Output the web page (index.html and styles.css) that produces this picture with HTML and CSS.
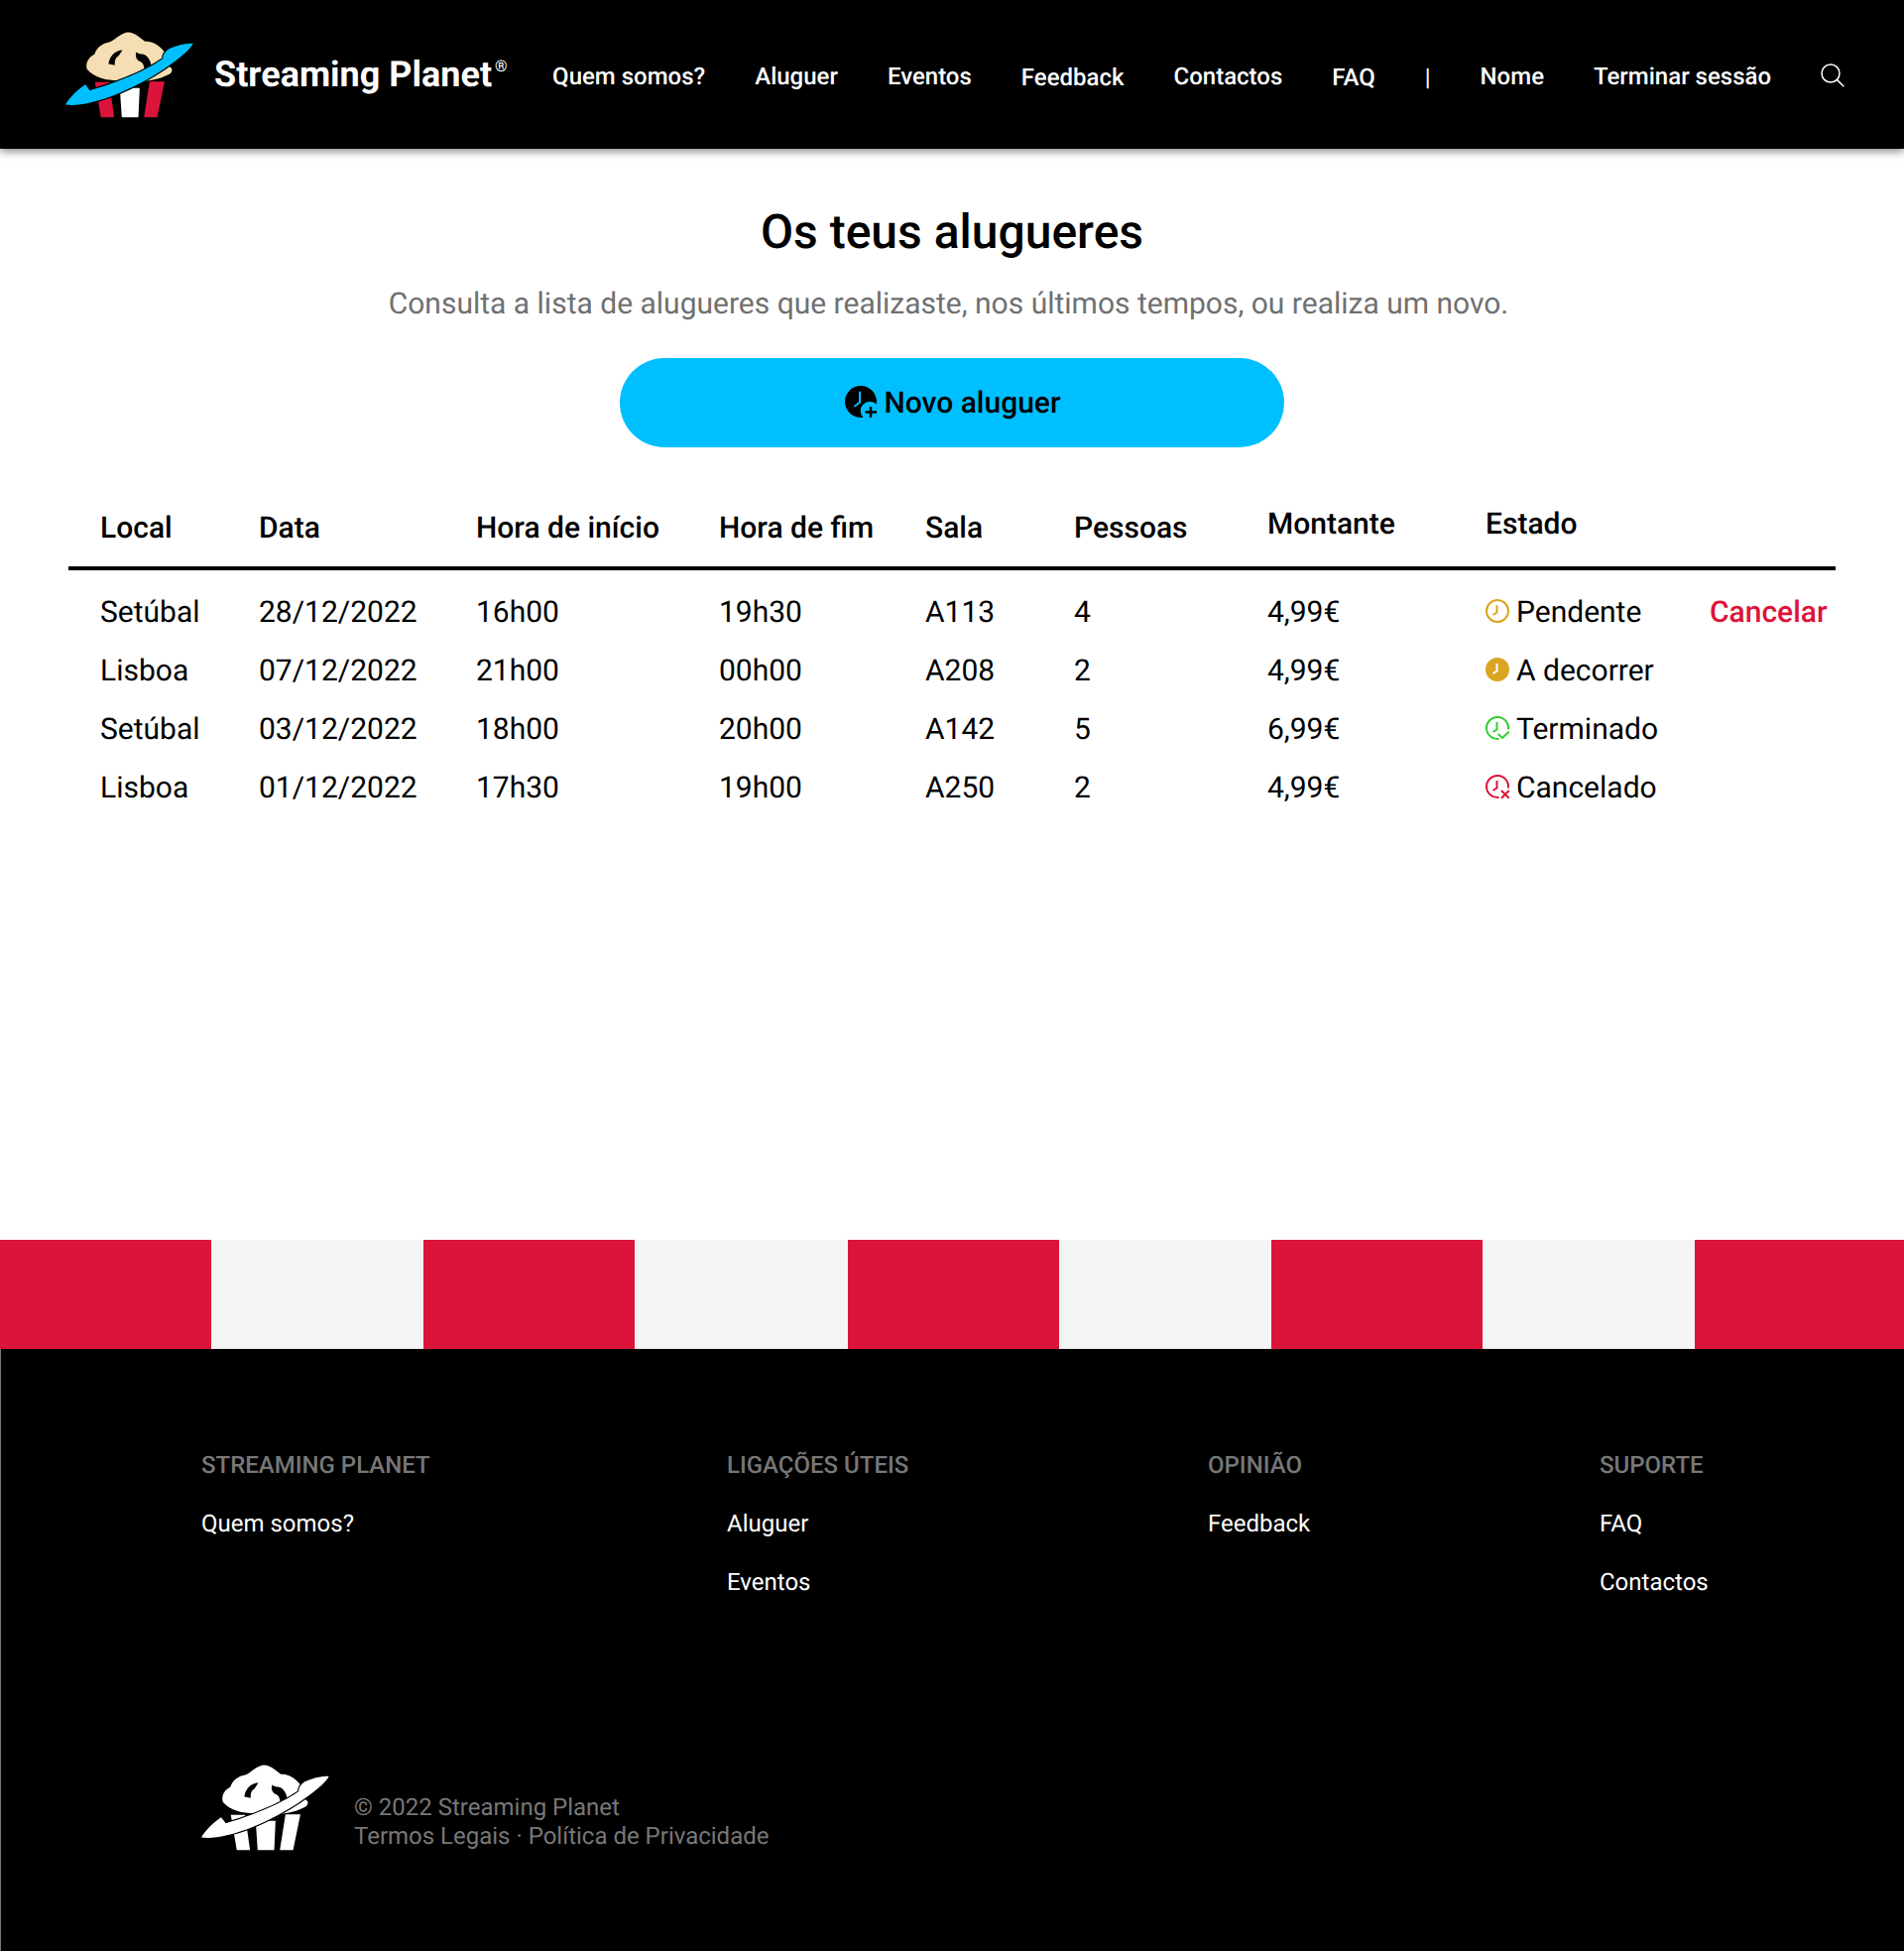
FILE: index.html
```html
<!DOCTYPE html>
<html lang="pt">
<head>
<meta charset="utf-8">
<title>Streaming Planet</title>
<link rel="stylesheet" href="styles.css">
</head>
<body>
<header class="topbar">
  <a class="brand" href="#">
    <svg class="logo" viewBox="48 65 386 260" aria-hidden="true">
      <path class="logo-stripe" d="M137 217H180L195 323H155Z"/>
      <path class="logo-center" d="M212 235H272L268 323H218Z"/>
      <path class="logo-stripe" d="M302 215H347L325 323H285Z"/>
      <path class="logo-corn" d="M113 178C108 160 116 143 136 132C142 112 160 100 178 97C195 92 212 70 235 66C258 66 272 82 288 94C312 92 335 108 350 130C356 150 350 160 362 170C374 176 372 190 355 196C320 215 250 222 205 212C175 212 135 205 113 178Z"/>
      <path class="logo-hole" d="M178 162C180 140 198 120 220 120L208 138C200 142 196 150 197 166Z"/>
      <path class="logo-hole" d="M262 126C272 136 286 128 294 140C304 150 308 165 306 172L286 182C286 165 280 155 268 152C260 145 258 135 262 126Z"/>
      <path class="logo-ring" d="M48 285C62 260 85 240 108 224L122 242C180 226 280 190 342 146C342 132 352 122 362 116C385 106 412 98 433 100C425 120 385 150 345 178C290 215 200 262 125 278C95 286 68 288 48 285Z"/>
    </svg>
    <span class="brand-name">Streaming Planet<sup class="brand-mark">®</sup></span>
  </a>
  <nav class="mainnav">
    <a href="#">Quem somos?</a>
    <a href="#">Aluguer</a>
    <a href="#">Eventos</a>
    <a class="nudge" href="#">Feedback</a>
    <a href="#">Contactos</a>
    <a class="nudge" href="#">FAQ</a>
    <span class="nudge sep">|</span>
    <a href="#">Nome</a>
    <a href="#">Terminar sessão</a>
    <a class="search" href="#" aria-label="Pesquisar">
      <svg viewBox="0 0 24 24"><circle cx="10" cy="10" r="9"/><path d="M16.6 16.6L23.3 23.3"/></svg>
    </a>
  </nav>
</header>

<main class="content">
  <h1 class="title">Os teus alugueres</h1>
  <p class="lead">Consulta a lista de alugueres que realizaste, nos últimos tempos, ou realiza um novo.</p>
  <a class="cta" href="#">
    <svg class="cta-icon" viewBox="0 0 32 32" aria-hidden="true">
      <path class="cta-disc" d="M16 0A16 16 0 0 1 31.800 18.500A9 9 0 0 0 18.500 31.800A16 16 0 1 1 16 0Z"/>
      <path class="cta-hand" d="M15 6.500V16.500L10 20.500"/>
      <path class="cta-plus" d="M26 21V32M20.500 26.500H32"/>
    </svg>
    <span>Novo aluguer</span>
  </a>
  <table class="rentals">
    <colgroup>
      <col class="c-local"><col class="c-date"><col class="c-start"><col class="c-end"><col class="c-room"><col class="c-people"><col class="c-amount"><col class="c-state"><col class="c-action">
    </colgroup>
    <thead>
      <tr>
        <th>Local</th><th>Data</th><th>Hora de início</th><th>Hora de fim</th><th>Sala</th><th>Pessoas</th><th class="raised">Montante</th><th class="raised">Estado</th><th></th>
      </tr>
    </thead>
    <tbody>
      <tr>
        <td>Setúbal</td><td>28/12/2022</td><td>16h00</td><td>19h30</td><td>A113</td><td>4</td><td>4,99€</td>
        <td><span class="state"><svg class="st st-gold" viewBox="0 0 24 24"><circle cx="12" cy="12" r="11"/><path d="M11.500 6V13.500L7.500 16"/></svg>Pendente</span></td>
        <td><a class="cancel" href="#">Cancelar</a></td>
      </tr>
      <tr>
        <td>Lisboa</td><td>07/12/2022</td><td>21h00</td><td>00h00</td><td>A208</td><td>2</td><td>4,99€</td>
        <td><span class="state"><svg class="st st-gold-fill" viewBox="0 0 24 24"><circle cx="12" cy="12" r="12"/><path d="M11.500 6V13.500L7.500 16"/></svg>A decorrer</span></td>
        <td></td>
      </tr>
      <tr>
        <td>Setúbal</td><td>03/12/2022</td><td>18h00</td><td>20h00</td><td>A142</td><td>5</td><td>6,99€</td>
        <td><span class="state"><svg class="st st-green" viewBox="0 0 24 24"><path d="M13.500 22.900A11 11 0 1 1 22.900 13.500"/><path d="M11.500 6V13.500L7.500 16"/><path d="M12.700 18L17 22L23.700 15.700"/></svg>Terminado</span></td>
        <td></td>
      </tr>
      <tr>
        <td>Lisboa</td><td>01/12/2022</td><td>17h30</td><td>19h00</td><td>A250</td><td>2</td><td>4,99€</td>
        <td><span class="state"><svg class="st st-red" viewBox="0 0 24 24"><path d="M13.500 22.900A11 11 0 1 1 22.900 13.500"/><path d="M11.500 6V13.500L7.500 16"/><path d="M16 16L23.700 23.700M23.700 16L16 23.700"/></svg>Cancelado</span></td>
        <td></td>
      </tr>
    </tbody>
  </table>
</main>

<div class="stripes" aria-hidden="true">
  <i class="red"></i><i></i><i class="red"></i><i></i><i class="red"></i><i></i><i class="red"></i><i></i><i class="red"></i>
</div>

<footer class="footer">
  <div class="foot-cols">
    <section class="foot-col">
      <h2>Streaming Planet</h2>
      <a href="#">Quem somos?</a>
    </section>
    <section class="foot-col">
      <h2>Ligações úteis</h2>
      <a href="#">Aluguer</a>
      <a href="#">Eventos</a>
    </section>
    <section class="foot-col">
      <h2>Opinião</h2>
      <a href="#">Feedback</a>
    </section>
    <section class="foot-col">
      <h2>Suporte</h2>
      <a href="#">FAQ</a>
      <a href="#">Contactos</a>
    </section>
  </div>
  <div class="foot-bottom">
    <svg class="logo logo-white" viewBox="48 65 386 260" aria-hidden="true">
      <path class="logo-stripe" d="M137 217H180L195 323H155Z"/>
      <path class="logo-center" d="M212 235H272L268 323H218Z"/>
      <path class="logo-stripe" d="M302 215H347L325 323H285Z"/>
      <path class="logo-corn" d="M113 178C108 160 116 143 136 132C142 112 160 100 178 97C195 92 212 70 235 66C258 66 272 82 288 94C312 92 335 108 350 130C356 150 350 160 362 170C374 176 372 190 355 196C320 215 250 222 205 212C175 212 135 205 113 178Z"/>
      <path class="logo-hole" d="M178 162C180 140 198 120 220 120L208 138C200 142 196 150 197 166Z"/>
      <path class="logo-hole" d="M262 126C272 136 286 128 294 140C304 150 308 165 306 172L286 182C286 165 280 155 268 152C260 145 258 135 262 126Z"/>
      <path class="logo-ring" d="M48 285C62 260 85 240 108 224L122 242C180 226 280 190 342 146C342 132 352 122 362 116C385 106 412 98 433 100C425 120 385 150 345 178C290 215 200 262 125 278C95 286 68 288 48 285Z"/>
    </svg>
    <p class="legal">© 2022 Streaming Planet<br>Termos Legais · Política de Privacidade</p>
  </div>
</footer>
</body>
</html>
```
FILE: styles.css
```css
* { box-sizing: border-box; }
html, body { margin: 0; padding: 0; }
body { font-family: Roboto, "Liberation Sans", sans-serif; color: #000; background: #fff; text-rendering: geometricPrecision; }
a { color: inherit; text-decoration: none; }

.topbar {
  position: relative;
  z-index: 1;
  display: flex;
  align-items: center;
  height: 150px;
  padding: 0 58px 0 66px;
  background: #000;
  color: #fff;
  box-shadow: 0 3px 8px rgba(0, 0, 0, .45);
}
.brand { display: flex; align-items: center; gap: 21px; flex: none; white-space: nowrap; }
.logo { display: block; width: 129px; height: 87px; flex: none; }
.logo-stripe { fill: #dc143c; stroke: none; }
.logo-center { fill: #fff; }
.logo-corn { fill: #f5deb3; }
.logo-hole { fill: #000; }
.logo-ring { fill: #00bfff; stroke: #000; stroke-width: 7; paint-order: stroke; }
.logo-white .logo-stripe, .logo-white .logo-corn, .logo-white .logo-ring { fill: #fff; }
.brand-name { position: relative; font-size: 36px; font-weight: 700; line-height: 40px; }
.brand-mark { position: absolute; top: 2px; left: 100%; margin-left: 3px; font-size: 16px; font-weight: 400; line-height: 20px; vertical-align: baseline; }
.mainnav { display: flex; flex: none; align-items: center; gap: 50px; margin-left: 61px; font-size: 24px; font-weight: 500; line-height: 28px; padding-top: 3px; white-space: nowrap; }
.nudge { margin-top: 2px; }
.sep { font-weight: 400; }
.search { display: block; width: 24px; height: 24px; margin-top: -2px; }
.search svg { display: block; width: 24px; height: 24px; fill: none; stroke: #fff; stroke-width: 1.500; }

.content { display: flex; flex-direction: column; align-items: center; height: 1100px; padding: 0 69px; }
.title { margin: 57px 0 0; font-size: 48px; font-weight: 500; line-height: 54px; }
.lead { margin: 28px 7px 0 0; font-size: 30px; line-height: 36px; color: #707070; }
.cta {
  display: flex; align-items: center; justify-content: center; gap: 7px;
  width: 670px; height: 90px; margin-top: 36px; padding-left: 2px;
  border-radius: 45px; background: #00bfff;
  font-size: 30px; font-weight: 500;
}
.cta-icon { display: block; width: 32px; height: 32px; margin-top: -2px; }
.cta-disc { fill: #000; }
.cta-hand { fill: none; stroke: #00bfff; stroke-width: 2; stroke-linecap: round; stroke-linejoin: round; }
.cta-plus { fill: none; stroke: #000; stroke-width: 2.500; }

.rentals { width: 1782px; margin-top: 60px; border-collapse: collapse; table-layout: fixed; font-size: 30px; }
.c-local { width: 192px; }
.c-date { width: 219px; }
.c-start { width: 245px; }
.c-end { width: 208px; }
.c-room { width: 150px; }
.c-people { width: 195px; }
.c-amount { width: 220px; }
.c-state { width: 226px; }
.c-action { width: 127px; }
.rentals th, .rentals td { padding: 0; text-align: left; white-space: nowrap; }
.rentals th:first-child, .rentals td:first-child { padding-left: 32px; }
.rentals thead tr { border-bottom: 4px solid #000; }
.rentals th { height: 62px; font-weight: 500; line-height: 36px; vertical-align: top; padding-top: 4px; }
.rentals th.raised { padding-top: 0; }
.rentals td { height: 59px; line-height: 36px; }
.rentals tbody tr:first-child td { height: 74px; padding-top: 14px; }
.state { display: flex; align-items: center; gap: 7px; }
.st { display: block; flex: none; width: 24px; height: 24px; margin-top: -4px; fill: none; stroke-width: 2; overflow: visible; }
.st-gold { stroke: #daa520; }
.st-gold-fill circle { fill: #daa520; stroke: none; }
.st-gold-fill path { stroke: #fff; }
.st-green { stroke: #32cd32; }
.st-red { stroke: #dc143c; }
.cancel { color: #dc143c; font-weight: 500; }

.stripes { display: grid; grid-template-columns: 213px 214px 213px 215px 213px 214px 213px 214px 211px; height: 110px; }
.stripes i { display: block; background: #f4f4f4; }
.stripes i.red { background: #dc143c; }

.footer { height: 607px; padding: 103px 0 0 203px; background: #000; color: #fff; border-left: 1px solid #777; }
.foot-cols { display: grid; grid-template-columns: 530px 485px 395px auto; height: 275px; font-size: 24px; line-height: 28px; margin-left: -1px; }
.foot-col { display: flex; flex-direction: column; gap: 31px; }
.foot-col h2 { margin: 0; font-size: 24px; font-weight: 500; line-height: 28px; color: #777; text-transform: uppercase; }
.foot-bottom { display: flex; align-items: flex-start; gap: 25px; margin-left: -1px; margin-top: 41px; }
.legal { margin: 29px 0 0; font-size: 24px; line-height: 29px; color: #777; }
```
